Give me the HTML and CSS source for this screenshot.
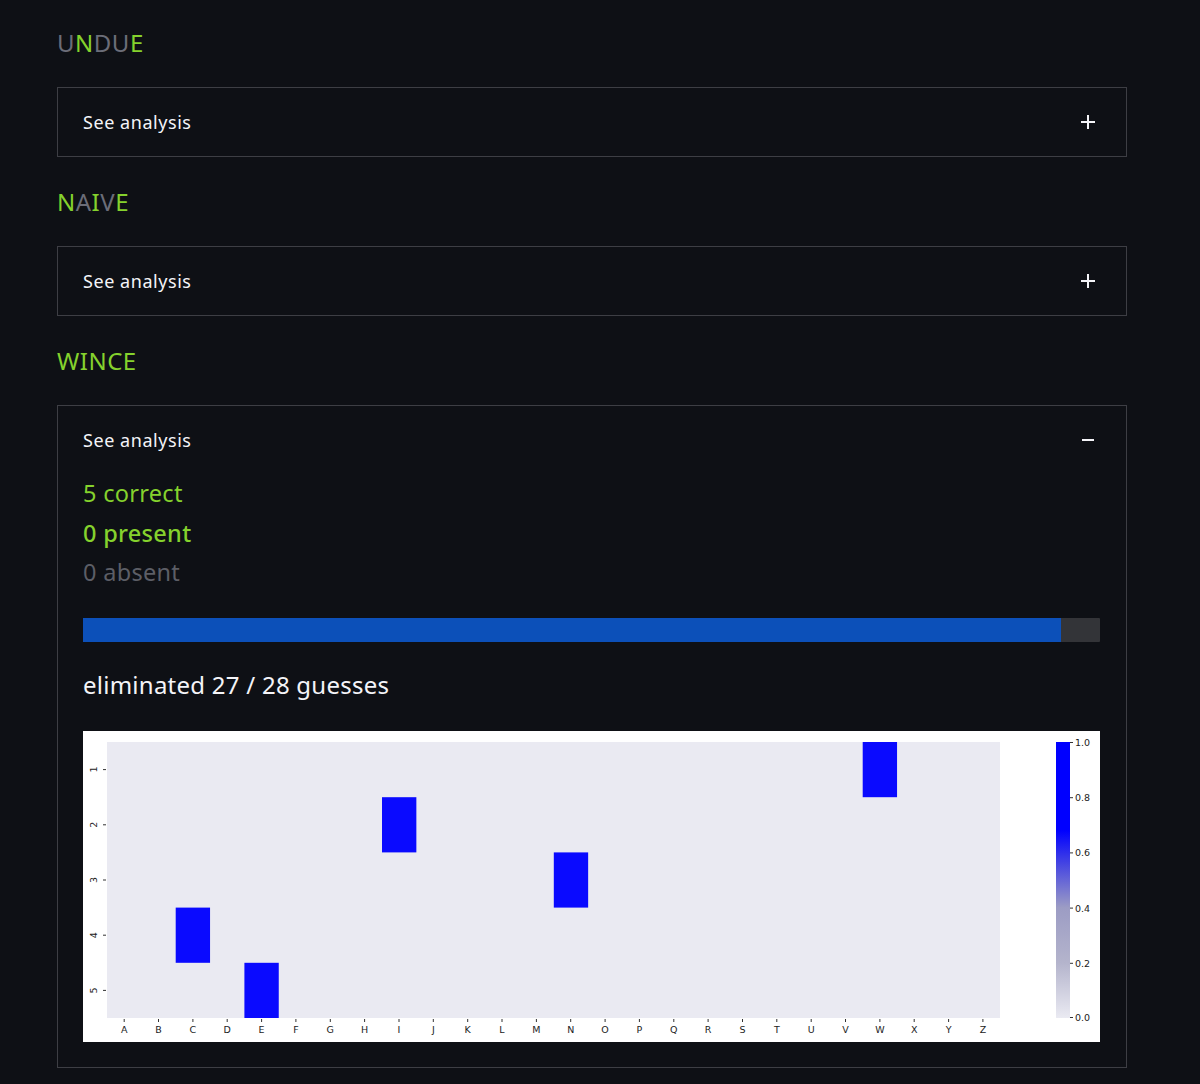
FILE: index.html
```html
<!DOCTYPE html>
<html>
<head>
<meta charset="utf-8">
<link rel="stylesheet" href="styles.css">
</head>
<body>
<main class="page">
  <section class="word">
    <h2 class="word-title"><span class="l-absent">U</span><span class="l-hit">N</span><span class="l-absent">D</span><span class="l-absent">U</span><span class="l-hit">E</span></h2>
    <div class="panel">
      <div class="panel-head"><span>See analysis</span><svg class="toggle" width="14" height="14" viewBox="0 0 14 14"><path d="M7 0v14M0 7h14" stroke="#f4f4f8" stroke-width="2"/></svg></div>
    </div>
  </section>
  <section class="word">
    <h2 class="word-title"><span class="l-hit">N</span><span class="l-absent">A</span><span class="l-hit">I</span><span class="l-absent">V</span><span class="l-hit">E</span></h2>
    <div class="panel">
      <div class="panel-head"><span>See analysis</span><svg class="toggle" width="14" height="14" viewBox="0 0 14 14"><path d="M7 0v14M0 7h14" stroke="#f4f4f8" stroke-width="2"/></svg></div>
    </div>
  </section>
  <section class="word">
    <h2 class="word-title"><span class="l-hit">WINCE</span></h2>
    <div class="panel">
      <div class="panel-head"><span>See analysis</span><svg class="toggle" width="14" height="14" viewBox="0 0 14 14"><path d="M1 7h12" stroke="#f4f4f8" stroke-width="2"/></svg></div>
      <div class="panel-body">
        <ul class="stats">
          <li class="s-correct">5 correct</li>
          <li class="s-present">0 present</li>
          <li class="s-absent">0 absent</li>
        </ul>
        <div class="progress"><div class="progress-fill" style="width:96.2%"></div></div>
        <p class="eliminated">eliminated 27 / 28 guesses</p>
        <div class="chart">
          <svg width="1017" height="311" viewBox="0 0 1017 311" xmlns="http://www.w3.org/2000/svg">
            <defs>
              <linearGradient id="cb" x1="0" y1="1" x2="0" y2="0">
                <stop offset="0" stop-color="#eaeaf2"/>
                <stop offset="0.2" stop-color="#b4b4cc"/>
                <stop offset="0.4" stop-color="#9c9cc4"/>
                <stop offset="0.55" stop-color="#4a4ae0"/>
                <stop offset="0.68" stop-color="#0000ff"/>
                <stop offset="1" stop-color="#0000ff"/>
              </linearGradient>
            </defs>
            <rect x="0" y="0" width="1017" height="311" fill="#ffffff"/>
            <rect x="24" y="11" width="893" height="276" fill="#eaeaf2"/>
            <g fill="#0a0aff">
              <rect x="779.7" y="11" width="34.35" height="55.2"/>
              <rect x="299" y="66.2" width="34.35" height="55.2"/>
              <rect x="470.8" y="121.4" width="34.35" height="55.2"/>
              <rect x="92.7" y="176.6" width="34.35" height="55.2"/>
              <rect x="161.4" y="231.8" width="34.35" height="55.2"/>
            </g>
            <g stroke="#333" stroke-width="1">
              <line x1="20" y1="38.6" x2="23" y2="38.6"/>
              <line x1="20" y1="93.8" x2="23" y2="93.8"/>
              <line x1="20" y1="149" x2="23" y2="149"/>
              <line x1="20" y1="204.2" x2="23" y2="204.2"/>
              <line x1="20" y1="259.4" x2="23" y2="259.4"/>
            </g>
            <g font-family="'DejaVu Sans', sans-serif" font-size="9.5" fill="#222" text-anchor="middle">
              <text transform="translate(13.5 38.6) rotate(-90)">1</text>
              <text transform="translate(13.5 93.8) rotate(-90)">2</text>
              <text transform="translate(13.5 149) rotate(-90)">3</text>
              <text transform="translate(13.5 204.2) rotate(-90)">4</text>
              <text transform="translate(13.5 259.4) rotate(-90)">5</text>
            </g>
            <g stroke="#333" stroke-width="1">
              <line x1="41.2" y1="288" x2="41.2" y2="291"/><line x1="75.5" y1="288" x2="75.5" y2="291"/><line x1="109.9" y1="288" x2="109.9" y2="291"/><line x1="144.2" y1="288" x2="144.2" y2="291"/><line x1="178.6" y1="288" x2="178.6" y2="291"/><line x1="212.9" y1="288" x2="212.9" y2="291"/><line x1="247.3" y1="288" x2="247.3" y2="291"/><line x1="281.6" y1="288" x2="281.6" y2="291"/><line x1="316" y1="288" x2="316" y2="291"/><line x1="350.3" y1="288" x2="350.3" y2="291"/><line x1="384.7" y1="288" x2="384.7" y2="291"/><line x1="419" y1="288" x2="419" y2="291"/><line x1="453.4" y1="288" x2="453.4" y2="291"/><line x1="487.7" y1="288" x2="487.7" y2="291"/><line x1="522.1" y1="288" x2="522.1" y2="291"/><line x1="556.4" y1="288" x2="556.4" y2="291"/><line x1="590.8" y1="288" x2="590.8" y2="291"/><line x1="625.1" y1="288" x2="625.1" y2="291"/><line x1="659.5" y1="288" x2="659.5" y2="291"/><line x1="693.8" y1="288" x2="693.8" y2="291"/><line x1="728.2" y1="288" x2="728.2" y2="291"/><line x1="762.5" y1="288" x2="762.5" y2="291"/><line x1="796.9" y1="288" x2="796.9" y2="291"/><line x1="831.2" y1="288" x2="831.2" y2="291"/><line x1="865.6" y1="288" x2="865.6" y2="291"/><line x1="899.9" y1="288" x2="899.9" y2="291"/>
            </g>
            <g font-family="'DejaVu Sans', sans-serif" font-size="9.5" fill="#222" text-anchor="middle">
              <text x="41.2" y="302">A</text><text x="75.5" y="302">B</text><text x="109.9" y="302">C</text><text x="144.2" y="302">D</text><text x="178.6" y="302">E</text><text x="212.9" y="302">F</text><text x="247.3" y="302">G</text><text x="281.6" y="302">H</text><text x="316" y="302">I</text><text x="350.3" y="302">J</text><text x="384.7" y="302">K</text><text x="419" y="302">L</text><text x="453.4" y="302">M</text><text x="487.7" y="302">N</text><text x="522.1" y="302">O</text><text x="556.4" y="302">P</text><text x="590.8" y="302">Q</text><text x="625.1" y="302">R</text><text x="659.5" y="302">S</text><text x="693.8" y="302">T</text><text x="728.2" y="302">U</text><text x="762.5" y="302">V</text><text x="796.9" y="302">W</text><text x="831.2" y="302">X</text><text x="865.6" y="302">Y</text><text x="899.9" y="302">Z</text>
            </g>
            <rect x="973" y="11" width="14" height="276" fill="url(#cb)"/>
            <g stroke="#333" stroke-width="1">
              <line x1="987" y1="11.5" x2="990" y2="11.5"/>
              <line x1="987" y1="66.7" x2="990" y2="66.7"/>
              <line x1="987" y1="121.9" x2="990" y2="121.9"/>
              <line x1="987" y1="177.1" x2="990" y2="177.1"/>
              <line x1="987" y1="232.3" x2="990" y2="232.3"/>
              <line x1="987" y1="286.5" x2="990" y2="286.5"/>
            </g>
            <g font-family="'DejaVu Sans', sans-serif" font-size="9.5" fill="#222">
              <text x="992" y="15">1.0</text>
              <text x="992" y="70.2">0.8</text>
              <text x="992" y="125.4">0.6</text>
              <text x="992" y="180.6">0.4</text>
              <text x="992" y="235.8">0.2</text>
              <text x="992" y="290">0.0</text>
            </g>
          </svg>
        </div>
      </div>
    </div>
  </section>
</main>
</body>
</html>
```

FILE: styles.css
```css
* { box-sizing: border-box; }
html, body {
  margin: 0;
  padding: 0;
  background: #0e1015;
}
body {
  font-family: "Noto Sans", "Open Sans", sans-serif;
  color: #f4f4f8;
}
.page {
  width: 1070px;
  margin-left: 57px;
  padding-top: 28px;
}
.word-title {
  margin: 0 0 29px;
  height: 30px;
  font-family: "Noto Sans", sans-serif;
  font-weight: 400;
  font-size: 24px;
  line-height: 30px;
  letter-spacing: 0.5px;
  color: #85d22d;
}
.l-hit { color: #85d22d; }
.l-absent { color: #6b6d78; }
.panel {
  border: 1px solid #3d3e44;
  margin-bottom: 30px;
}
.panel-head {
  height: 68px;
  display: flex;
  align-items: center;
  justify-content: space-between;
  padding: 0 31px 0 25px;
  font-size: 18px;
  letter-spacing: 0.55px;
  color: #f4f4f8;
}
.toggle { display: block; }
.panel-body {
  padding: 0 26px 25px 25px;
}
.stats {
  list-style: none;
  margin: 0;
  padding: 0;
  font-size: 23.5px;
  line-height: 39.5px;
  letter-spacing: 0.3px;
}
.s-correct { color: #85d22d; }
.s-present { color: #85d22d; font-weight: 500; }
.s-absent { color: #5c5e66; }
.progress {
  margin-top: 25px;
  height: 24px;
  background: #333438;
  border-radius: 1px;
}
.progress-fill {
  height: 100%;
  background: #0c50b9;
}
.eliminated {
  margin: 29px 0 0;
  font-size: 24px;
  line-height: 28px;
  letter-spacing: 0.25px;
  color: #f4f4f8;
}
.chart {
  margin-top: 32px;
  height: 311px;
}
.chart svg { display: block; }
```
